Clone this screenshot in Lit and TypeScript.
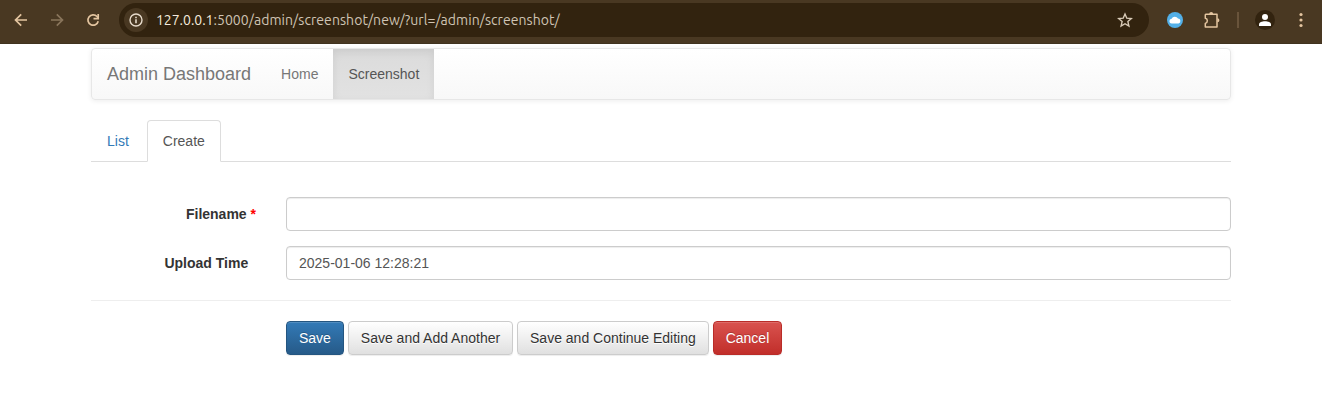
import { LitElement, html, css } from "lit";
import { customElement } from "lit/decorators.js";

@customElement("browser-bar")
class BrowserBar extends LitElement {
  static styles = css`
    :host {
      display: flex;
      align-items: center;
      height: 44px;
      padding: 0 9px 4px 9px;
      box-sizing: border-box;
      background: #493822;
      border-bottom: 1px solid #40331f;
      color: #e4c5a0;
    }
    svg { display: block; flex: none; }
    .nav { display: flex; gap: 12px; width: 110px; flex: none; }
    .off { color: #89755b; }
    .omnibox {
      flex: none;
      width: 1030px;
      height: 34px;
      border-radius: 17px;
      background: #32230f;
      display: flex;
      align-items: center;
      box-sizing: border-box;
      padding: 0 12px 0 5px;
    }
    .info {
      width: 24px;
      height: 24px;
      border-radius: 50%;
      background: #493822;
      display: grid;
      place-items: center;
      color: #e8dccd;
    }
    .url {
      flex: 1;
      margin-left: 8px;
      font: 14px/20px Ubuntu, "Noto Sans", sans-serif;
      letter-spacing: 0.06px;
      color: #cfc4b4;
      white-space: pre;
    }
    .host { color: #f5ebdd; letter-spacing: -0.03px; }
    .star { color: #d9cbb8; }
    .tools { display: flex; align-items: center; flex: none; }
    .cloud { margin-left: 18px; }
    .puzzle { margin-left: 19px; }
    .rule { width: 2px; height: 16px; background: #69543b; margin-left: 15px; }
    .user { margin-left: 16px; }
    .dots { margin-left: 16px; }
  `;
  render() {
    return html`
      <div class="nav">
        <svg width="24" height="24" viewBox="0 0 24 24" fill="none" stroke="currentColor" stroke-width="1.7"><path d="M18 12H7M12.200 6.300 6.500 12l5.700 5.700" /></svg>
        <svg class="off" width="24" height="24" viewBox="0 0 24 24" fill="none" stroke="currentColor" stroke-width="1.7"><path d="M6 12h11M11.800 6.300l5.700 5.700-5.700 5.700" /></svg>
        <svg width="24" height="24" viewBox="0 0 24 24" fill="none" stroke="currentColor" stroke-width="1.7"><path d="M17.200 13.200A5.200 5.200 0 1 1 16 8.500l1 1.200" /><path d="M17.200 6v4.600h-4.700" /></svg>
      </div>
      <div class="omnibox">
        <div class="info">
          <svg width="14" height="14" viewBox="0 0 14 14"><circle cx="7" cy="7" r="6" fill="none" stroke="currentColor" stroke-width="1.4" /><path d="M6.200 6.200h1.600v4H6.200zM6.200 3.700h1.600v1.500H6.200z" fill="currentColor" /></svg>
        </div>
        <div class="url"><span class="host">127.0.0.1</span>:5000/admin/screenshot/new/?url=/admin/screenshot/</div>
        <svg class="star" width="24" height="24" viewBox="0 0 24 24" fill="none" stroke="currentColor" stroke-width="1.4"><path d="m12 6 1.800 4.200 4.500.4-3.400 3 1 4.400-3.900-2.300L8.100 18l1-4.400-3.400-3 4.500-.4z" /></svg>
      </div>
      <div class="tools">
        <svg class="cloud" width="16" height="16" viewBox="0 0 16 16"><circle cx="8" cy="8" r="8" fill="#53b0e8" /><path d="M4.800 11.400a2.300 2.300 0 0 1-.2-4.600A3.600 3.600 0 0 1 11 6.500a2.500 2.500 0 0 1 .6 4.900z" fill="#fff" /></svg>
        <svg class="puzzle" width="20" height="20" viewBox="0 0 20 20"><path d="M3.800 4.200H15V17H3.300v-3.600c2.700-.8 2.700-4.600 0-5.200V4.700z" fill="none" stroke="currentColor" stroke-width="1.5" stroke-linejoin="round" /><path d="M7.200 4a2 2 0 0 1 4 0zM15.400 8.200a2 2 0 0 1 0 4z" fill="currentColor" /></svg>
        <div class="rule"></div>
        <svg class="user" width="20" height="20" viewBox="0 0 20 20"><circle cx="10" cy="10" r="10" fill="#32230f" /><circle cx="10" cy="7" r="3" fill="#fff" /><path d="M4 16v-1.500c0-2 3-3.200 6-3.200s6 1.200 6 3.200V16z" fill="#fff" /></svg>
        <svg class="dots" width="20" height="20" viewBox="0 0 20 20" fill="currentColor"><circle cx="10" cy="4.500" r="1.600" /><circle cx="10" cy="10" r="1.600" /><circle cx="10" cy="15.500" r="1.600" /></svg>
      </div>
    `;
  }
}

@customElement("app-root")
class AppRoot extends LitElement {
  static styles = css`
    :host {
      display: block;
      height: 412px;
      overflow: hidden;
      background: #fff;
      font: 14px/20px "Liberation Sans", Arial, sans-serif;
      color: #333;
    }
    * { box-sizing: border-box; }
    .container { width: 1140px; margin: 4px auto 0; }
    .navbar {
      display: flex;
      height: 52px;
      border: 1px solid #e7e7e7;
      border-radius: 4px;
      background: linear-gradient(#fff, #f8f8f8);
      box-shadow: inset 0 1px 0 rgba(255, 255, 255, 0.15), 0 1px 5px rgba(0, 0, 0, 0.075);
      color: #777;
    }
    .navbar a { padding: 15px; }
    .navbar .brand { font-size: 18px; }
    .navbar .on {
      color: #555;
      background: linear-gradient(#dbdbdb, #e2e2e2);
      box-shadow: inset 0 3px 9px rgba(0, 0, 0, 0.075);
    }
    .tabs {
      display: flex;
      height: 42px;
      margin-top: 20px;
      border-bottom: 1px solid #ddd;
    }
    .tabs a {
      height: 42px;
      padding: 10px 15px;
      border: 1px solid transparent;
      border-radius: 4px 4px 0 0;
      margin-right: 2px;
      color: #337ab7;
    }
    .tabs .on { color: #555; background: #fff; border-color: #ddd #ddd #fff; }
    .form {
      display: grid;
      grid-template-columns: 165px 945px;
      column-gap: 30px;
      row-gap: 15px;
      margin-top: 35px;
    }
    label { font-weight: 700; text-align: right; padding-top: 7px; }
    .req { color: #f00; }
    input {
      display: block;
      width: 100%;
      height: 34px;
      margin: 0;
      padding: 6px 12px;
      border: 1px solid #ccc;
      border-radius: 4px;
      box-shadow: inset 0 1px 1px rgba(0, 0, 0, 0.075);
      font: inherit;
      color: #555;
      outline: 0;
    }
    .line { height: 1px; background: #eee; margin: 20px 0; }
    .actions { display: flex; gap: 3.890px; padding-left: 195px; }
    .btn {
      height: 34px;
      padding: 6px 12px;
      border: 1px solid #ccc;
      border-radius: 4px;
      background: linear-gradient(#fff, #e0e0e0);
      box-shadow: inset 0 1px 0 rgba(255, 255, 255, 0.15), 0 1px 1px rgba(0, 0, 0, 0.075);
      text-shadow: 0 1px 0 #fff;
      font: inherit;
      color: #333;
      white-space: nowrap;
    }
    .primary {
      color: #fff;
      border-color: #245580;
      background: linear-gradient(#337ab7, #265a88);
      text-shadow: 0 -1px 0 rgba(0, 0, 0, 0.2);
    }
    .danger {
      color: #fff;
      border-color: #b92c28;
      background: linear-gradient(#d9534f, #c12e2a);
      text-shadow: 0 -1px 0 rgba(0, 0, 0, 0.2);
    }
  `;
  render() {
    return html`
      <browser-bar></browser-bar>
      <div class="container">
        <nav class="navbar">
          <a class="brand">Admin Dashboard</a><a>Home</a><a class="on">Screenshot</a>
        </nav>
        <div class="tabs"><a>List</a><a class="on">Create</a></div>
        <div class="form">
          <label for="filename">Filename <span class="req">*</span></label>
          <input id="filename" type="text" />
          <label for="time">Upload Time&nbsp;&nbsp;</label>
          <input id="time" type="text" .value=${"2025-01-06 12:28:21"} />
        </div>
        <div class="line"></div>
        <div class="actions">
          <button class="btn primary">Save</button>
          <button class="btn">Save and Add Another</button>
          <button class="btn">Save and Continue Editing</button>
          <button class="btn danger">Cancel</button>
        </div>
      </div>
    `;
  }
}
